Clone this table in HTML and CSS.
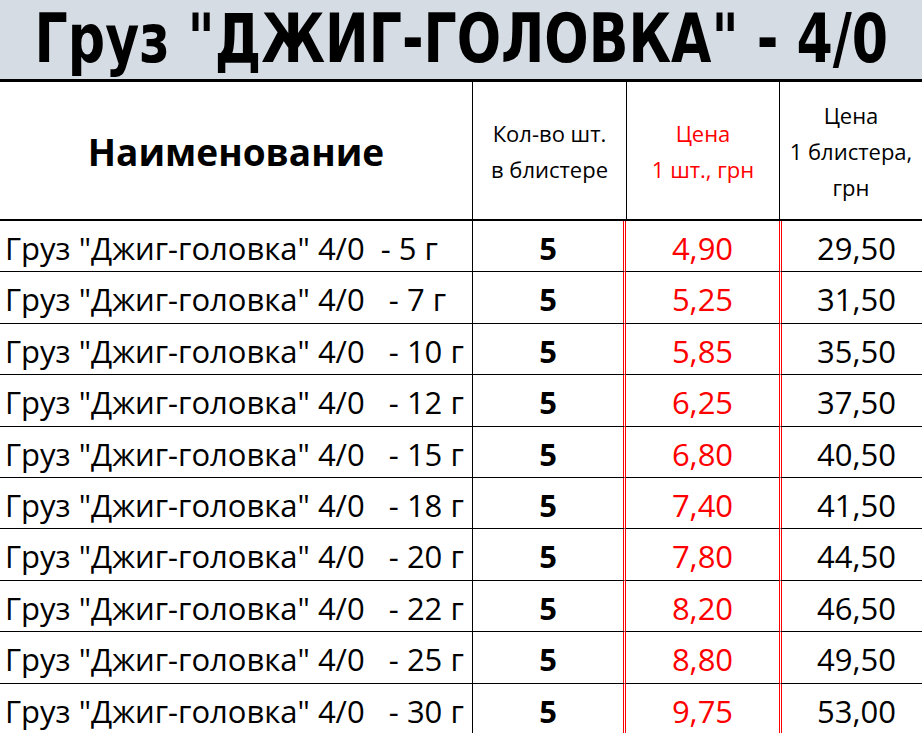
FILE: index.html
```html
<!DOCTYPE html>
<html lang="ru">
<head>
<meta charset="utf-8">
<link rel="stylesheet" href="styles.css">
</head>
<body>
<div class="title"><span class="title-text">Груз "ДЖИГ-ГОЛОВКА" - 4/0</span></div>
<table class="price">
  <colgroup>
    <col class="c-name"><col class="c-qty"><col class="c-unit"><col class="c-pack">
  </colgroup>
  <thead>
    <tr>
      <th class="h-name">Наименование</th>
      <th class="h-small">Кол-во шт.<br>в блистере</th>
      <th class="h-small red">Цена<br>1 шт., грн</th>
      <th class="h-small">Цена<br>1 блистера,<br>грн</th>
    </tr>
  </thead>
  <tbody>
    <tr><td class="name">Груз "Джиг-головка" 4/0&nbsp; - 5 г</td><td class="qty">5</td><td class="unit">4,90</td><td class="pack">29,50</td></tr>
    <tr><td class="name">Груз "Джиг-головка" 4/0&nbsp;&nbsp; - 7 г</td><td class="qty">5</td><td class="unit">5,25</td><td class="pack">31,50</td></tr>
    <tr><td class="name">Груз "Джиг-головка" 4/0&nbsp;&nbsp; - 10 г</td><td class="qty">5</td><td class="unit">5,85</td><td class="pack">35,50</td></tr>
    <tr><td class="name">Груз "Джиг-головка" 4/0&nbsp;&nbsp; - 12 г</td><td class="qty">5</td><td class="unit">6,25</td><td class="pack">37,50</td></tr>
    <tr><td class="name">Груз "Джиг-головка" 4/0&nbsp;&nbsp; - 15 г</td><td class="qty">5</td><td class="unit">6,80</td><td class="pack">40,50</td></tr>
    <tr><td class="name">Груз "Джиг-головка" 4/0&nbsp;&nbsp; - 18 г</td><td class="qty">5</td><td class="unit">7,40</td><td class="pack">41,50</td></tr>
    <tr><td class="name">Груз "Джиг-головка" 4/0&nbsp;&nbsp; - 20 г</td><td class="qty">5</td><td class="unit">7,80</td><td class="pack">44,50</td></tr>
    <tr><td class="name">Груз "Джиг-головка" 4/0&nbsp;&nbsp; - 22 г</td><td class="qty">5</td><td class="unit">8,20</td><td class="pack">46,50</td></tr>
    <tr><td class="name">Груз "Джиг-головка" 4/0&nbsp;&nbsp; - 25 г</td><td class="qty">5</td><td class="unit">8,80</td><td class="pack">49,50</td></tr>
    <tr><td class="name">Груз "Джиг-головка" 4/0&nbsp;&nbsp; - 30 г</td><td class="qty">5</td><td class="unit">9,75</td><td class="pack">53,00</td></tr>
  </tbody>
</table>
</body>
</html>
```
FILE: styles.css
```css
html, body {
  margin: 0;
  padding: 0;
  background: #fff;
}
body {
  width: 922px;
  height: 733px;
  overflow: hidden;
  font-family: "Open Sans", "Noto Sans", sans-serif;
  color: #000;
}
.title {
  height: 79px;
  background: #d6dce4;
  border-bottom: 3px solid #000;
  display: flex;
  justify-content: center;
  align-items: center;
  white-space: nowrap;
  overflow: hidden;
}
.title-text {
  flex: none;
  line-height: 79px;
  font-family: "DejaVu Sans Condensed", "DejaVu Sans", sans-serif;
  font-weight: bold;
  font-size: 67px;
  transform: scaleX(0.865);
}
.price {
  width: 922px;
  border-collapse: separate;
  border-spacing: 0;
  table-layout: fixed;
}
.c-name { width: 472px; }
.c-qty { width: 154px; }
.c-unit { width: 153px; }
.c-pack { width: 143px; }

thead th {
  height: 135px;
  padding: 0;
  border-bottom: 2px solid #000;
  font-weight: normal;
  vertical-align: middle;
  text-align: center;
}
thead th + th { border-left: 1px solid #000; }
thead th.h-name {
  font-size: 37px;
  font-weight: bold;
  padding-top: 2px;
}
.h-small {
  font-size: 22px;
  line-height: 36px;
}
.red { color: #ff0000; }

tbody td {
  height: 46.4px;
  padding: 4px 0 0 0;
  border-bottom: 1px solid #000;
  vertical-align: top;
  font-size: 31px;
  line-height: 46px;
  white-space: nowrap;
  overflow: hidden;
}
tbody td.name {
  padding-left: 5px;
}
tbody td.qty {
  text-align: center;
  font-weight: bold;
  border-left: 1px solid #000;
  border-right: 3px double #ff0000;
}
tbody td.unit {
  text-align: center;
  color: #ff0000;
}
tbody td.pack {
  text-align: right;
  padding-right: 26px;
  border-left: 3px double #ff0000;
}
```
